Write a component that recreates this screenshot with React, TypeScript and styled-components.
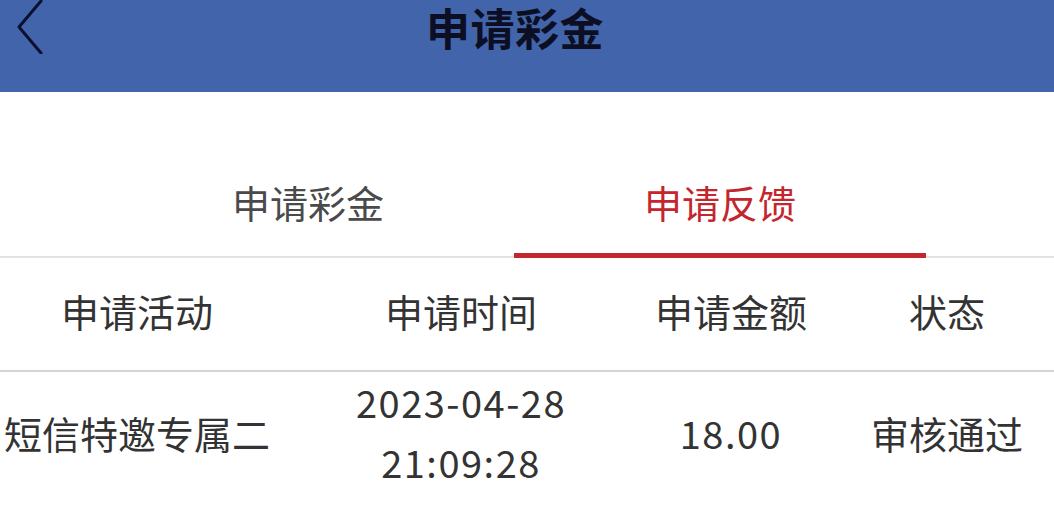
import styled, { createGlobalStyle } from "styled-components";

const GlobalStyle = createGlobalStyle`
  html, body {
    margin: 0;
    padding: 0;
    background: #ffffff;
    font-family: "Noto Sans CJK SC", "Noto Sans", sans-serif;
  }
`;

const columns = ["申请活动", "申请时间", "申请金额", "状态"];

const App = () => {
  return (
    <Page>
      <GlobalStyle />
      <Header>
        <BackButton aria-label="返回">
          <svg width="28" height="54" viewBox="0 0 28 54" fill="none">
            <path
              d="M25 1 L3 27 L25 53"
              stroke="#0b1030"
              strokeWidth="3"
              strokeLinecap="round"
              strokeLinejoin="round"
            />
          </svg>
        </BackButton>
        <Title>申请彩金</Title>
      </Header>

      <TabBar>
        <Tab>申请彩金</Tab>
        <Tab $active>申请反馈</Tab>
      </TabBar>

      <HeadRow>
        {columns.map((col, i) => (
          <Cell key={col} $last={i === columns.length - 1}>
            {col}
          </Cell>
        ))}
      </HeadRow>

      <BodyRow>
        <Cell>短信特邀专属二</Cell>
        <Cell $numeric>
          <TimeLine>2023-04-28</TimeLine>
          <TimeLine>21:09:28</TimeLine>
        </Cell>
        <Cell $numeric>18.00</Cell>
        <Cell $last>审核通过</Cell>
      </BodyRow>
    </Page>
  );
};

export default App;

const Page = styled.div`
  width: 1054px;
  min-height: 526px;
  background: #ffffff;
  overflow: hidden;
`;

const Header = styled.header`
  position: relative;
  height: 92px;
  background-color: #4264aa;
  display: flex;
  justify-content: center;
  align-items: flex-start;
`;

const BackButton = styled.button`
  position: absolute;
  left: 16px;
  top: 0;
  padding: 0;
  border: none;
  background: transparent;
  display: flex;
`;

const Title = styled.h1`
  margin: 0;
  margin-left: -24px;
  padding-top: 0;
  font-size: 44px;
  font-weight: 700;
  line-height: 54px;
  color: #0c0f24;
  letter-spacing: 0.5px;
`;

const TabBar = styled.nav`
  margin-top: 58px;
  padding-left: 102px;
  display: flex;
  border-bottom: 2px solid #e2e2e2;
`;

const Tab = styled.div<{ $active?: boolean }>`
  width: 412px;
  height: 103px;
  display: flex;
  align-items: center;
  justify-content: center;
  font-size: 38px;
  color: ${(p) => (p.$active ? "#c3262c" : "#4a4a4a")};
  border-bottom: 5px solid ${(p) => (p.$active ? "#c3262c" : "transparent")};
  margin-bottom: -2px;
`;

const HeadRow = styled.div`
  display: grid;
  grid-template-columns: 274px 374px 166px 1fr;
  height: 104px;
  padding-bottom: 8px;
  border-bottom: 2px solid #d4d4d4;
  align-items: center;
`;

const BodyRow = styled.div`
  display: grid;
  grid-template-columns: 274px 374px 166px 1fr;
  height: 120px;
  align-items: center;
`;

const Cell = styled.div<{ $last?: boolean; $numeric?: boolean }>`
  text-align: center;
  font-size: 38px;
  color: #333333;
  padding-left: ${(p) => (p.$last ? "26px" : "0")};
  letter-spacing: ${(p) => (p.$numeric ? "1.5px" : "0")};
  white-space: nowrap;
`;

const TimeLine = styled.div`
  line-height: 60px;
`;
